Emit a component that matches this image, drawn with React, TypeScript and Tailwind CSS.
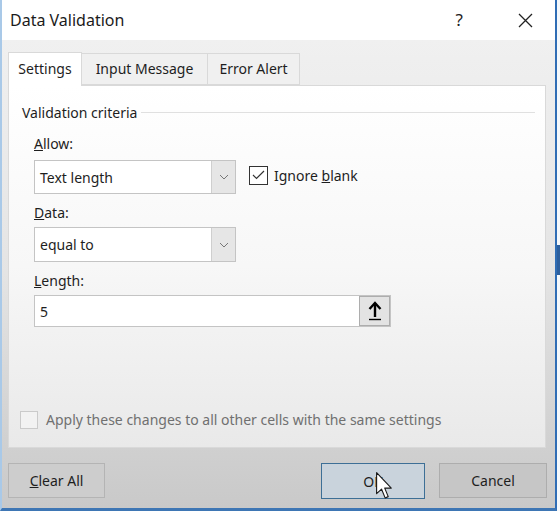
import React from 'react';

const font = { fontFamily: '"Noto Sans", "Open Sans", sans-serif' };

const Chevron = () => (
  <svg width="10" height="6" viewBox="0 0 10 6" fill="none">
    <path d="M1 1 L5 5 L9 1" stroke="#777" strokeWidth="1" />
  </svg>
);

const Select = ({ value }: { value: string }) => (
  <div className="flex w-[202px] h-[34px] bg-white border border-[#c4c4c4]">
    <div className="flex-1 flex items-center pl-[5px] text-[14px] text-[#1e1e1e]">{value}</div>
    <div className="w-[24px] flex items-center justify-center bg-[#e6e6e6] border-l border-[#cfcfcf]">
      <Chevron />
    </div>
  </div>
);

const Cursor = () => (
  <svg className="absolute left-[53px] top-[8px]" width="20" height="28" viewBox="0 0 13 20">
    <path
      d="M0.5 0.5 L0.5 15.5 L4 12.2 L6.6 18.5 L8.8 17.6 L6.3 11.5 L11 11.5 Z"
      fill="#ffffff"
      stroke="#1a1a1a"
      strokeWidth="0.8"
      strokeLinejoin="round"
    />
  </svg>
);

const App: React.FC = () => {
  return (
    <div className="w-[560px] h-[511px] bg-white flex overflow-hidden" style={font}>
      <div className="w-[557px] h-[511px] flex flex-col border-l-2 border-l-[#a9c9e8] border-r-2 border-r-[#2f6db5] border-b-[3px] border-b-[#3e76b4]">
        {/* title bar */}
        <div className="h-[40px] bg-white flex items-center pl-[8px] shrink-0">
          <span className="text-[16px] text-[#1b1b1b]">Data Validation</span>
          <span className="ml-auto text-[17px] text-[#222] mr-[55px]">?</span>
          <svg className="mr-[22px]" width="15" height="15" viewBox="0 0 15 15">
            <path d="M1 1 L14 14 M14 1 L1 14" stroke="#222" strokeWidth="1.3" />
          </svg>
        </div>

        {/* body */}
        <div className="flex-1 flex flex-col bg-gradient-to-b from-[#f0f0f0] via-[#e4e4e4] to-[#c9c9c9] pl-[6px] pr-[8px]">
          {/* tabs */}
          <div className="flex items-end h-[45px] text-[14px] text-[#1e1e1e]">
            <div className="relative z-10 w-[74px] h-[34px] bg-white border border-b-0 border-[#d9d9d9] flex items-center justify-center -mb-px pb-[2px]">
              Settings
            </div>
            <div className="w-[126px] h-[32px] bg-[#f0f0f0] border border-l-0 border-[#d9d9d9] flex items-center justify-center pb-[2px]">
              Input Message
            </div>
            <div className="w-[92px] h-[32px] bg-[#f0f0f0] border border-l-0 border-[#d9d9d9] flex items-center justify-center pb-[2px]">
              Error Alert
            </div>
          </div>

          {/* panel */}
          <div className="h-[363px] mr-[1px] border border-[#d9d9d9] bg-gradient-to-b from-white via-[#f7f7f7] to-[#e9e9e9] flex flex-col text-[14px] text-[#1e1e1e]">
            <div className="flex items-center mt-[16px] ml-[13px] mr-[10px]">
              <span>Validation criteria</span>
              <div className="flex-1 h-px bg-[#e0e0e0] ml-[4px]" />
            </div>

            <div className="ml-[25px] mt-[11px]">
              <div className="leading-[20px]">
                <span className="underline">A</span>llow:
              </div>
              <div className="flex items-center mt-[6px]">
                <Select value="Text length" />
                <div className="flex items-center ml-[13px] -mt-[4px]">
                  <div className="w-[19px] h-[19px] border border-[#333] bg-white flex items-center justify-center">
                    <svg width="13" height="10" viewBox="0 0 13 10">
                      <path d="M1 5 L4.5 8.5 L12 1" stroke="#333" strokeWidth="1.2" fill="none" />
                    </svg>
                  </div>
                  <span className="ml-[6px]">
                    Ignore <span className="underline">b</span>lank
                  </span>
                </div>
              </div>

              <div className="leading-[20px] mt-[9px]">
                <span className="underline">D</span>ata:
              </div>
              <div className="mt-[4px]">
                <div className="h-[35px] flex">
                  <div className="flex w-[202px] bg-white border border-[#c4c4c4]">
                    <div className="flex-1 flex items-center pl-[5px]">equal to</div>
                    <div className="w-[24px] flex items-center justify-center bg-[#e6e6e6] border-l border-[#cfcfcf]">
                      <Chevron />
                    </div>
                  </div>
                </div>
              </div>

              <div className="leading-[20px] mt-[9px]">
                <span className="underline">L</span>ength:
              </div>
              <div className="mt-[4px] w-[357px] h-[32px] bg-white border border-[#c4c4c4] flex items-center">
                <span className="pl-[5px] flex-1">5</span>
                <div className="w-[31px] h-[30px] bg-[#e3e3e3] border border-[#adadad] flex items-center justify-center">
                  <svg width="14" height="20" viewBox="0 0 14 20">
                    <path d="M7 2 L7 16" stroke="#000" strokeWidth="2.4" />
                    <path d="M1.5 8 L7 2 L12.5 8" stroke="#000" strokeWidth="2.4" fill="none" />
                    <path d="M1 18.5 L13 18.5" stroke="#000" strokeWidth="1.4" />
                  </svg>
                </div>
              </div>
            </div>

            <div className="flex items-center ml-[11px] mt-auto mb-[17px]">
              <div className="w-[18px] h-[18px] border border-[#cacaca] bg-[#f2f2f2]" />
              <span className="ml-[8px] text-[#707070]">Apply these changes to all other cells with the same settings</span>
            </div>
          </div>

          {/* buttons */}
          <div className="flex items-start mt-[15px] text-[14px] text-[#1e1e1e]">
            <div className="w-[99px] h-[35px] bg-[#cdcdcd] border border-[#b4b4b4] flex items-center justify-center">
              <span>
                <span className="underline">C</span>lear All
              </span>
            </div>
            <div className="relative ml-[216px] w-[106px] h-[36px] bg-[#c9d3dc] border border-[#3d6f96] flex items-center justify-center">
              <span>OK</span>
              <Cursor />
            </div>
            <div className="ml-[14px] w-[110px] h-[35px] bg-[#c6c6c6] border border-[#adadad] flex items-center justify-center">
              Cancel
            </div>
          </div>
        </div>
      </div>
      <div className="flex-1 flex flex-col">
        <div className="h-[245px] bg-[#f4f8fc]" />
        <div className="h-[30px] bg-[#2c5f9e]" />
        <div className="flex-1 bg-[#f4f8fc]" />
      </div>
    </div>
  );
};

export default App;
